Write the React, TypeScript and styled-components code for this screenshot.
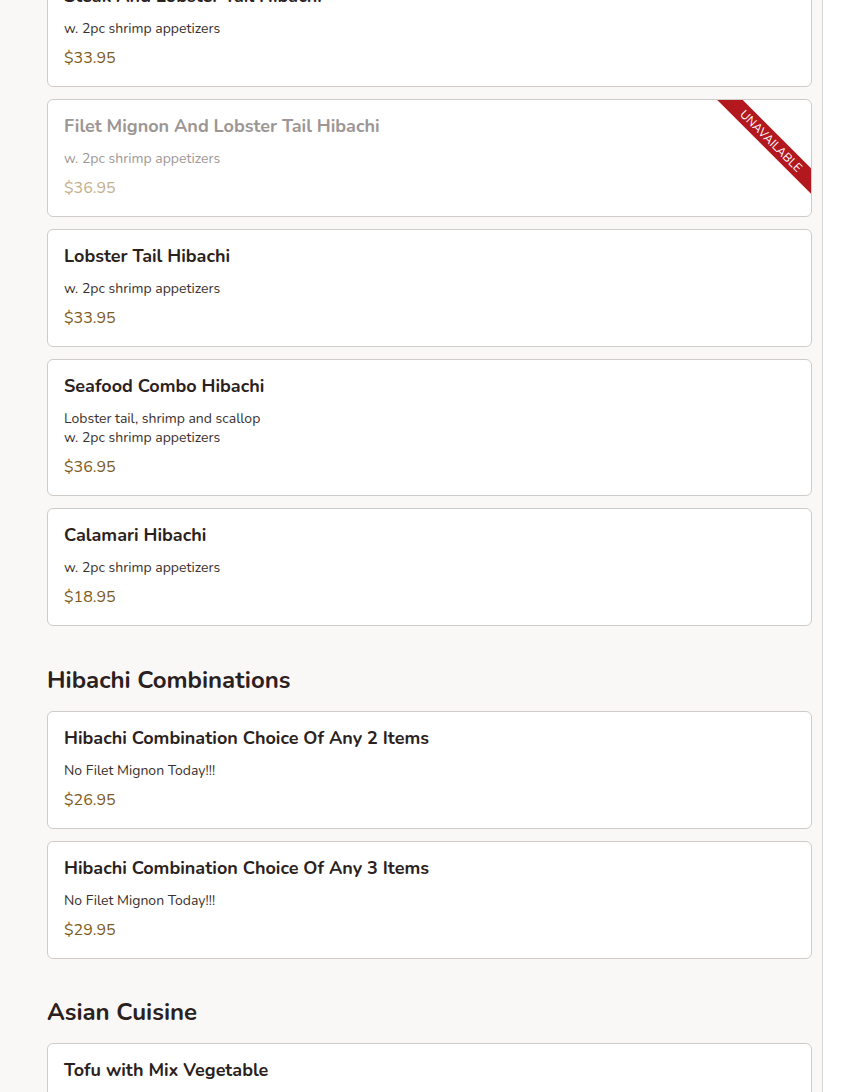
import React from "react";
import styled, { createGlobalStyle } from "styled-components";

const Global = createGlobalStyle`
  html, body { margin: 0; padding: 0; background: #ffffff; }
  body { font-family: "Nunito", Lato, "Noto Sans", sans-serif; -webkit-font-smoothing: antialiased; }
`;

const Page = styled.div`
  box-sizing: border-box;
  width: 823px;
  min-height: 1092px;
  background: #faf8f6;
  border-right: 1px solid #d8d5d2;
  padding: 0 10px 40px 47px;
  overflow: hidden;
`;

const Scroller = styled.div`
  margin-top: -31px;
  display: flex;
  flex-direction: column;
`;

const Section = styled.section`
  display: flex;
  flex-direction: column;
  gap: 12px;
  & + & { margin-top: 38px; }
  & + & + & { margin-top: 37px; }
`;

const SectionTitle = styled.h2`
  margin: 0 0 3px 0;
  font-size: 24px;
  line-height: 32px;
  font-weight: 700;
  color: #2a201d;
`;

const Card = styled.div`
  position: relative;
  overflow: hidden;
  background: #ffffff;
  border: 1px solid #cfcbc8;
  border-radius: 6px;
  padding: 16px;
  display: flex;
  flex-direction: column;
`;

const Title = styled.div<{ $off?: boolean }>`
  font-size: 18px;
  line-height: 20px;
  font-weight: 700;
  color: ${(p) => (p.$off ? "#9c9694" : "#2b2220")};
  margin-bottom: 13px;
`;

const Desc = styled.div<{ $off?: boolean }>`
  font-size: 14px;
  line-height: 19px;
  color: ${(p) => (p.$off ? "#9e9896" : "#3a302d")};
  margin-bottom: 8px;
  white-space: pre-line;
`;

const Price = styled.div<{ $off?: boolean }>`
  font-size: 16px;
  line-height: 24px;
  color: ${(p) => (p.$off ? "#c4ae8c" : "#7d5a1c")};
`;

const Ribbon = styled.div`
  position: absolute;
  top: 32px;
  right: -35px;
  width: 150px;
  height: 18px;
  background: #b3181f;
  color: #ffffff;
  font-size: 12px;
  line-height: 18px;
  text-align: center;
  text-transform: uppercase;
  transform: rotate(45deg);
`;

type Item = { name: string; desc: string; price: string; off?: boolean };

const hibachi: Item[] = [
  { name: "Steak And Lobster Tail Hibachi", desc: "w. 2pc shrimp appetizers", price: "$33.95" },
  { name: "Filet Mignon And Lobster Tail Hibachi", desc: "w. 2pc shrimp appetizers", price: "$36.95", off: true },
  { name: "Lobster Tail Hibachi", desc: "w. 2pc shrimp appetizers", price: "$33.95" },
  { name: "Seafood Combo Hibachi", desc: "Lobster tail, shrimp and scallop\nw. 2pc shrimp appetizers", price: "$36.95" },
  { name: "Calamari Hibachi", desc: "w. 2pc shrimp appetizers", price: "$18.95" },
];

const combos: Item[] = [
  { name: "Hibachi Combination Choice Of Any 2 Items", desc: "No Filet Mignon Today!!!", price: "$26.95" },
  { name: "Hibachi Combination Choice Of Any 3 Items", desc: "No Filet Mignon Today!!!", price: "$29.95" },
];

const asian: Item[] = [
  { name: "Tofu with Mix Vegetable", desc: "Served with white rice", price: "$13.95" },
];

const MenuCard = ({ item }: { item: Item }) => (
  <Card>
    <Title $off={item.off}>{item.name}</Title>
    <Desc $off={item.off}>{item.desc}</Desc>
    <Price $off={item.off}>{item.price}</Price>
    {item.off && <Ribbon>Unavailable</Ribbon>}
  </Card>
);

export default function App() {
  return (
    <>
      <Global />
      <Page>
        <Scroller>
          <Section>
            {hibachi.map((i) => (
              <MenuCard key={i.name} item={i} />
            ))}
          </Section>
          <Section>
            <SectionTitle>Hibachi Combinations</SectionTitle>
            {combos.map((i) => (
              <MenuCard key={i.name} item={i} />
            ))}
          </Section>
          <Section>
            <SectionTitle>Asian Cuisine</SectionTitle>
            {asian.map((i) => (
              <MenuCard key={i.name} item={i} />
            ))}
          </Section>
        </Scroller>
      </Page>
    </>
  );
}
